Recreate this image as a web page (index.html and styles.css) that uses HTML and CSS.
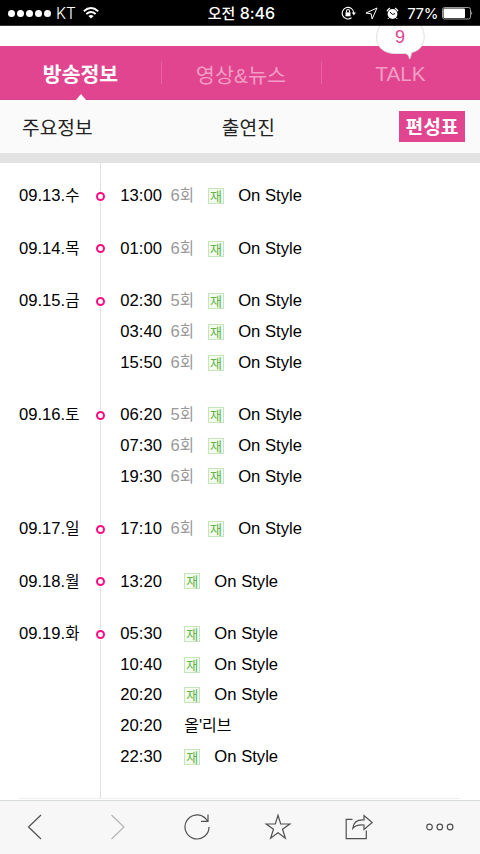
FILE: index.html
```
<!DOCTYPE html>
<html lang="ko">
<head>
<meta charset="utf-8">
<title>편성표</title>
<link rel="stylesheet" href="styles.css">
</head>
<body>
<div class="screen">
  <header class="status">
    <div class="status-left">
      <span class="signal"><i></i><i></i><i></i><i></i><i></i></span>
      <span class="carrier">KT</span>
      <svg class="wifi" width="16" height="12" viewBox="0 0 16 12" fill="none" stroke="#fff" stroke-width="1.9"><path d="M.8 4.2Q8-2 15.2 4.2M3.3 7Q8 3 12.700 7"/><path d="M8 11.500 5.400 8.900Q8 7 10.600 8.900Z" fill="#fff" stroke="none"/></svg>
    </div>
    <div class="clock"><span class="clock-ko">오전</span> 8:46</div>
    <div class="status-right">
      <svg width="16" height="14" viewBox="0 0 16 14" fill="none" stroke="#fff" stroke-width="1.100"><path d="M10.500 11.800A5.800 5.800 0 1 1 12.800 7"/><path d="M10.600 6.500h4.400L12.800 9.300Z" fill="#fff" stroke="none"/><rect x="4.500" y="6.300" width="5" height="4" fill="#fff" stroke="none"/><path d="M5.500 6.500V5a1.500 1.500 0 0 1 3 0v1.500"/></svg>
      <svg width="13" height="13" viewBox="0 0 13 13" fill="none" stroke="#fff" stroke-width="1"><path d="M12 1 .9 6l5.300.8.900 5.200Z"/></svg>
      <svg width="13" height="13" viewBox="0 0 13 13" fill="#fff"><circle cx="6.500" cy="7" r="4.900"/><path d="M1 4.200A6 6 0 0 1 4 1.100M9 1.100a6 6 0 0 1 3 3.100" fill="none" stroke="#fff" stroke-width="1.300"/><path d="M2.900 10.800 1.700 12M10.100 10.800l1.200 1.200" stroke="#fff"/><path d="M4 5.200 6.500 7.400 9 6.600" fill="none" stroke="#000"/></svg>
      <span class="percent">77%</span>
      <svg class="battery" width="31" height="13" viewBox="0 0 31 13"><rect x=".5" y=".5" width="28" height="11.500" rx="2" fill="none" stroke="#999"/><rect x="1.500" y="1.500" width="21.500" height="9.500" rx="1" fill="#fff"/><path d="M29.500 4q1.500 2.200 0 4.500Z" fill="#fff"/></svg>
    </div>
  </header>
  <div class="strip"></div>
  <nav class="tabs">
    <a class="tab on">방송정보</a>
    <a class="tab">영상&amp;뉴스</a>
    <a class="tab talk">TALK
      <svg class="bubble" width="52" height="34" viewBox="0 0 52 34"><path d="M5 0C-2 11 1 27 20 27.500H30Q34 28 34.500 33 36 31 36.500 26.500C50 24 52 9 46 0" fill="#fff" stroke="#e2dfe1"/></svg>
      <span class="count">9</span>
    </a>
  </nav>
  <nav class="subtabs">
    <a>주요정보</a><a class="cast">출연진</a><a class="current">편성표</a>
  </nav>
  <main class="schedule">
    <section class="day"><h2>09.13.<b>수</b></h2><i class="dot"></i><ul>
      <li><time>13:00</time><span class="ep">6<b>회</b></span><em>재</em><span>On Style</span></li></ul></section>
    <section class="day"><h2>09.14.<b>목</b></h2><i class="dot"></i><ul>
      <li><time>01:00</time><span class="ep">6<b>회</b></span><em>재</em><span>On Style</span></li></ul></section>
    <section class="day"><h2>09.15.<b>금</b></h2><i class="dot"></i><ul>
      <li><time>02:30</time><span class="ep">5<b>회</b></span><em>재</em><span>On Style</span></li>
      <li><time>03:40</time><span class="ep">6<b>회</b></span><em>재</em><span>On Style</span></li>
      <li><time>15:50</time><span class="ep">6<b>회</b></span><em>재</em><span>On Style</span></li></ul></section>
    <section class="day"><h2>09.16.<b>토</b></h2><i class="dot"></i><ul>
      <li><time>06:20</time><span class="ep">5<b>회</b></span><em>재</em><span>On Style</span></li>
      <li><time>07:30</time><span class="ep">6<b>회</b></span><em>재</em><span>On Style</span></li>
      <li><time>19:30</time><span class="ep">6<b>회</b></span><em>재</em><span>On Style</span></li></ul></section>
    <section class="day"><h2>09.17.<b>일</b></h2><i class="dot"></i><ul>
      <li><time>17:10</time><span class="ep">6<b>회</b></span><em>재</em><span>On Style</span></li></ul></section>
    <section class="day"><h2>09.18.<b>월</b></h2><i class="dot"></i><ul>
      <li><time>13:20</time><span class="ep none"></span><em>재</em><span>On Style</span></li></ul></section>
    <section class="day"><h2>09.19.<b>화</b></h2><i class="dot"></i><ul>
      <li><time>05:30</time><span class="ep none"></span><em>재</em><span>On Style</span></li>
      <li><time>10:40</time><span class="ep none"></span><em>재</em><span>On Style</span></li>
      <li><time>20:20</time><span class="ep none"></span><em>재</em><span>On Style</span></li>
      <li><time>20:20</time><span class="ep none"></span><span class="olive"><b>올</b>'<b>리브</b></span></li>
      <li><time>22:30</time><span class="ep none"></span><em>재</em><span>On Style</span></li></ul></section>
  </main>
  <footer class="toolbar">
    <svg viewBox="0 0 30 30"><path d="M21 3 8.500 15l12.500 12"/></svg>
    <svg class="off" viewBox="0 0 30 30"><path d="M10.500 3l12.500 12L10.500 27"/></svg>
    <svg viewBox="0 0 30 30"><path d="M27 15A12 12 0 1 1 23.500 6.500L25.500 9M26 2.500V9.300H19"/></svg>
    <svg viewBox="0 0 30 30"><path d="M15 3.300 17.700 12h9.100l-7.300 5.200 2.900 9L15 20.700l-7.400 5.500 2.900-9L3.200 12h9.100Z"/></svg>
    <svg viewBox="0 0 30 30"><path d="M8.500 7.300H2.200v19.300H22.300V18.500M8.800 16.300C9.500 10.500 13.500 7.500 20 8V3.500L28.200 10.500 20 17.500V13C15 12.500 11.500 13 8.800 16.300Z"/></svg>
    <svg viewBox="0 0 30 30"><circle cx="4.500" cy="15" r="2.800"/><circle cx="14.800" cy="15" r="2.800"/><circle cx="25.100" cy="15" r="2.800"/></svg>
  </footer>
</div>
</body>
</html>
```
FILE: styles.css
```
* { box-sizing: border-box; }
body { margin: 0; background: #fff; color: #000; font-family: "Liberation Sans", "Noto Sans CJK KR", sans-serif; }
.screen { width: 480px; height: 854px; display: flex; flex-direction: column; overflow: hidden; }

.status { flex: none; height: 26px; background: #000; color: #fff; display: grid; grid-template-columns: 1fr auto 1fr; align-items: center; padding: 0 7px 0 8px; border-bottom: 1px solid #333; font: 16px/25px Inter, "Noto Sans CJK KR", sans-serif; white-space: nowrap; }
.status-left, .status-right { display: flex; align-items: center; }
.signal { display: flex; gap: 2px; }
.signal i { width: 7px; height: 7px; border-radius: 50%; background: #fff; }
.carrier { margin-left: 5px; font-size: 15.500px; font-weight: 300; }
.wifi { margin-left: 7px; }
.clock { padding: 1px 0 0 2px; font-size: 16px; font-weight: 500; }
.clock-ko { font-size: 15px; }
.status-right { justify-content: flex-end; }
.status-right svg + svg { margin-left: 8px; }
.percent { margin-left: 8px; padding-top: 1px; font-size: 15px; font-weight: 400; letter-spacing: -.4px; }
.battery { margin-left: 4px; }

.strip { flex: none; height: 20px; }
.tabs { flex: none; height: 54px; display: grid; grid-template-columns: 161px 160px 159px; background: #e1458f; border-bottom: 1px solid #d34488; }
.tab { position: relative; display: flex; justify-content: center; align-items: center; height: 53px; padding-top: 2px; color: #f29dc5; font-size: 20.800px; white-space: nowrap; }
.tab + .tab::before { content: ""; position: absolute; left: 0; top: 16px; width: 1px; height: 22px; background: #e865a3; }
.on { padding-top: 0; color: #fff; font-weight: 700; font-size: 20.500px; }
.on::after { content: ""; position: absolute; left: 76px; bottom: -1px; border: 5.500px solid transparent; border-top: 0; border-bottom: 6px solid #fff; }
.bubble { position: absolute; left: 54px; top: -20px; }
.count { position: absolute; left: 54px; width: 50px; top: -19px; text-align: center; line-height: 20px; font-size: 18px; color: #e1458f; }

.subtabs { flex: none; height: 63px; padding: 0 15px 0 22px; background: #fafafa; border-bottom: 10px solid #e2e2e2; display: flex; align-items: center; justify-content: space-between; color: #222; font-size: 19.200px; white-space: nowrap; }
.cast { margin-left: 5px; }
.current { background: #e1458f; color: #fff; font-weight: 700; height: 31px; line-height: 33px; width: 66px; text-align: center; }

.schedule { flex: 1; min-height: 0; padding: 18.300px 0 0 19px; font-size: 16.640px; background: linear-gradient(#e0e0e0, #e0e0e0) 100px 0 / 1px 635px no-repeat, linear-gradient(#eee, #eee) 19px 635px / 441px 1px no-repeat; }
.schedule b { font-weight: 400; font-size: 15.500px; }
.day { display: flex; margin-bottom: 21.760px; }
.day h2 { width: 77px; margin: 0; font-size: 16.640px; font-weight: 400; line-height: 30.720px; height: 30.720px; white-space: nowrap; }
.dot { flex: none; width: 9px; height: 9px; margin-top: 10.700px; border: 2px solid #ff0a82; border-radius: 50%; background: #fff; box-shadow: 0 0 0 1px #fff; }
.day ul { list-style: none; margin: 0 0 0 15.300px; padding: 0; }
.day li { display: flex; align-items: center; height: 30.720px; line-height: 30.720px; white-space: nowrap; }
.day time { width: 50.200px; }
.ep { width: 37.500px; color: #999; }
.none { width: 13.700px; }
.olive b { font-size: 16px; }
.day em { width: 16px; height: 16px; margin: -1px 14.200px 0 0; border: 1px solid #c5e6b9; background: #f4fbf1; color: #60b548; font: normal 13px/13px "Noto Sans CJK KR", sans-serif; display: flex; justify-content: center; }

.toolbar { flex: none; height: 54px; background: #f7f7f7; border-top: 1px solid #d3dad8; display: flex; justify-content: space-between; align-items: center; padding: 0 25px 1px 20px; }
.toolbar svg { width: 30px; height: 30px; fill: none; stroke: #505050; stroke-width: 1.200; }
.toolbar .off { stroke: #b5b5b5; }
```
